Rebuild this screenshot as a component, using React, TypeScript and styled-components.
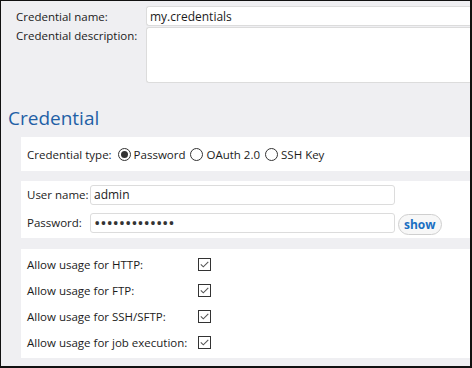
import React, { useState } from 'react';
import styled, { createGlobalStyle } from 'styled-components';

const GlobalStyle = createGlobalStyle`
  html, body {
    margin: 0;
    padding: 0;
    background: #ffffff;
  }
  * {
    box-sizing: border-box;
  }
`;

const Frame = styled.div`
  width: 472px;
  height: 368px;
  overflow: hidden;
  background: #efeff2;
  border-style: solid;
  border-color: #111;
  border-width: 1px 2px 2px 1px;
  font-family: 'Open Sans', 'Noto Sans', sans-serif;
  font-size: 11.5px;
  color: #1b1b1b;
`;

const TopGrid = styled.div`
  display: grid;
  grid-template-columns: 130px 1fr;
  row-gap: 1px;
  padding: 5px 0 0 15px;
`;

const TopLabel = styled.label<{ $top?: boolean }>`
  display: flex;
  align-items: ${p => (p.$top ? 'flex-start' : 'center')};
  padding-top: ${p => (p.$top ? '1px' : '0')};
  white-space: nowrap;
`;

const TextField = styled.input<{ $width?: number }>`
  height: 20px;
  width: ${p => (p.$width ? `${p.$width}px` : '100%')};
  border: 1px solid #dcdcdc;
  border-right: none;
  border-radius: 3px 0 0 3px;
  background: #fff;
  padding: 0 3px;
  font: inherit;
  font-size: 12px;
  color: #1b1b1b;
  outline: none;
`;

const TextArea = styled.textarea`
  height: 56px;
  width: 100%;
  border: 1px solid #dcdcdc;
  border-right: none;
  border-radius: 3px 0 0 3px;
  background: #fff;
  resize: none;
  font: inherit;
  outline: none;
`;

const Heading = styled.h2`
  margin: 22px 0 0 7px;
  font-size: 19px;
  font-weight: 400;
  line-height: 26px;
  color: #1f5fa6;
`;

const Panel = styled.div<{ $height: number; $gap: number }>`
  margin: ${p => p.$gap}px 0 0 20px;
  height: ${p => p.$height}px;
  background: #fff;
  padding: 0 0 0 6px;
  display: flex;
  flex-direction: column;
  justify-content: center;
`;

const Row = styled.div<{ $height?: number }>`
  display: flex;
  align-items: center;
  height: ${p => (p.$height ? `${p.$height}px` : 'auto')};
  white-space: nowrap;
`;

const RowLabel = styled.span<{ $width?: number }>`
  width: ${p => (p.$width ? `${p.$width}px` : 'auto')};
  flex-shrink: 0;
  margin-right: 6px;
`;

const Radio = styled.span<{ $checked?: boolean }>`
  width: 13px;
  height: 13px;
  border-radius: 50%;
  border: 1px solid #333;
  display: inline-flex;
  align-items: center;
  justify-content: center;
  margin: 0 3px 0 0;
  &::after {
    content: '';
    display: ${p => (p.$checked ? 'block' : 'none')};
    width: 7px;
    height: 7px;
    border-radius: 50%;
    background: #333;
  }
`;

const RadioOption = styled.span`
  display: inline-flex;
  align-items: center;
  margin-right: 5px;
`;

const Fields = styled.div`
  display: flex;
  flex-direction: column;
  gap: 6px;
`;

const BoxField = styled(TextField)`
  border-right: 1px solid #dcdcdc;
  border-radius: 3px;
`;

const SecretField = styled(BoxField)`
  font-size: 17px;
  letter-spacing: -0.2px;
  color: #333;
`;

const ShowButton = styled.button`
  margin-left: 3px;
  margin-top: 3px;
  height: 21px;
  padding: 0 5px;
  border: 1px solid #cfcfcf;
  border-radius: 11px;
  background: #f7f7f7;
  color: #1a6fc2;
  font: inherit;
  font-size: 12px;
  font-weight: 700;
  cursor: pointer;
`;

const CheckBox = styled.span`
  width: 13px;
  height: 13px;
  border: 1px solid #333;
  display: inline-flex;
  align-items: center;
  justify-content: center;
  background: #fff;
`;

const Check = () => (
  <CheckBox>
    <svg width="9" height="7" viewBox="0 0 9 7">
      <path d="M0.8 3.4 L3.3 5.8 L8.3 0.8" fill="none" stroke="#555" strokeWidth="1.1" />
    </svg>
  </CheckBox>
);

const usages = ['HTTP', 'FTP', 'SSH/SFTP', 'job execution'];

export default function App() {
  const [type, setType] = useState('password');
  const [name, setName] = useState('my.credentials');
  const [user, setUser] = useState('admin');
  const [pwd, setPwd] = useState('secretpass123');
  const [show, setShow] = useState(false);

  return (
    <Frame>
      <GlobalStyle />
      <TopGrid>
        <TopLabel>Credential name:</TopLabel>
        <TextField value={name} onChange={e => setName(e.target.value)} />
        <TopLabel $top>Credential description:</TopLabel>
        <TextArea />
      </TopGrid>

      <Heading>Credential</Heading>

      <Panel $height={34} $gap={6}>
        <Row>
          <RowLabel>Credential type:</RowLabel>
          {[
            ['password', 'Password'],
            ['oauth', 'OAuth 2.0'],
            ['ssh', 'SSH Key'],
          ].map(([key, label]) => (
            <RadioOption key={key} onClick={() => setType(key)}>
              <Radio $checked={type === key} />
              {label}
            </RadioOption>
          ))}
        </Row>
      </Panel>

      <Panel $height={57} $gap={10}>
        <Fields>
          <Row>
            <RowLabel $width={57}>User name:</RowLabel>
            <BoxField $width={305} value={user} onChange={e => setUser(e.target.value)} />
          </Row>
          <Row>
            <RowLabel $width={57}>Password:</RowLabel>
            <SecretField
              $width={305}
              type={show ? 'text' : 'password'}
              value={pwd}
              onChange={e => setPwd(e.target.value)}
            />
            <ShowButton onClick={() => setShow(!show)}>show</ShowButton>
          </Row>
        </Fields>
      </Panel>

      <Panel $height={109} $gap={11}>
        {usages.map(u => (
          <Row key={u} $height={26}>
            <RowLabel $width={165}>Allow usage for {u}:</RowLabel>
            <Check />
          </Row>
        ))}
      </Panel>
    </Frame>
  );
}
